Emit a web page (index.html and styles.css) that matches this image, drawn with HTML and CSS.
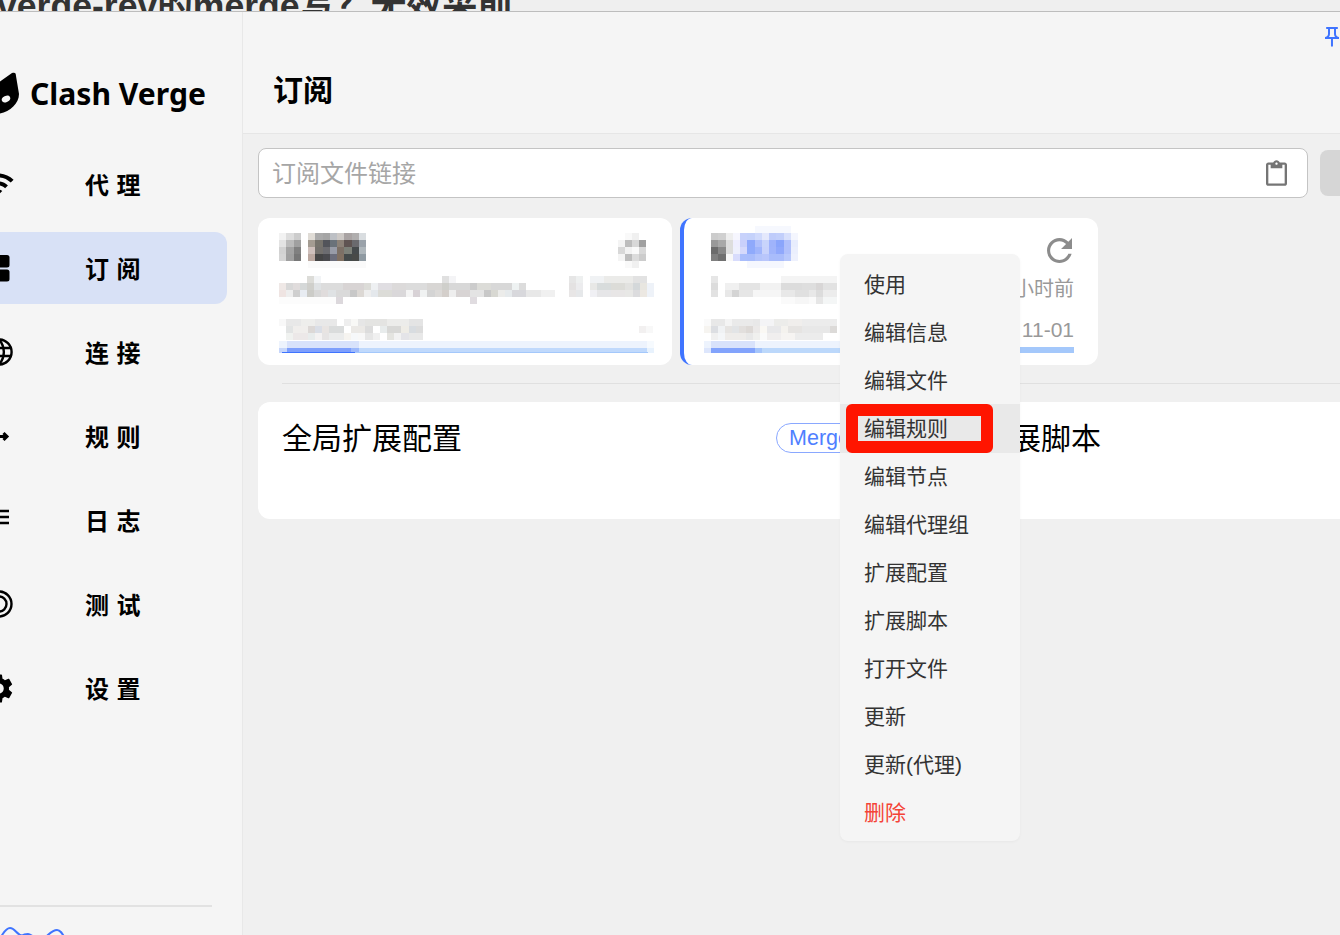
FILE: index.html
```html
<!DOCTYPE html>
<html lang="zh-CN">
<head>
<meta charset="utf-8">
<title>Clash Verge</title>
<link rel="stylesheet" href="styles.css">
</head>
<body>
<div class="strip"><div class="strip-text">verge-rev的merge写？无效采前</div></div>
<div class="app">
  <aside class="sidebar">
    <div class="logo">
      <svg class="cat" viewBox="0 0 48 42"><path d="M0 10 C8 6 18 8 27 11 L41 1 C44 0 45 1 45 4 L48 22 C48 33 36 42 24 42 C10 42 0 34 0 24Z" fill="#000"/><ellipse cx="35" cy="27" rx="4.5" ry="3" transform="rotate(-28 35 27)" fill="#f5f5f5"/></svg>
      <span class="logo-text">Clash Verge</span>
    </div>
    <nav class="nav">
      <a class="nav-item"><svg class="nav-icon wifi" viewBox="0 0 24 24"><path d="M1 9l2 2c4.97-4.97 13.03-4.97 18 0l2-2C16.93 2.93 7.08 2.93 1 9zm8 8l3 3 3-3c-1.65-1.66-4.34-1.66-6 0zm-4-4l2 2c2.76-2.76 7.24-2.76 10 0l2-2C15.14 9.14 8.87 9.14 5 13z"/></svg><span>代 理</span></a>
      <a class="nav-item active"><svg class="nav-icon" viewBox="0 0 28 28"><rect x="0" y="1" width="24.5" height="12.5" rx="2.5"/><rect x="0" y="15.5" width="24.5" height="12" rx="2.5"/></svg><span>订 阅</span></a>
      <a class="nav-item"><svg class="nav-icon line" viewBox="0 0 28 28"><circle cx="14" cy="14" r="12.6"/><path d="M1.600 10h24.800M1.600 18h24.800M14 1.600c-6.500 7-6.500 17.800 0 24.800M14 1.600c6.500 7 6.500 17.800 0 24.800"/></svg><span>连 接</span></a>
      <a class="nav-item"><svg class="nav-icon line heavy" viewBox="0 0 28 28"><path d="M4 14.500h18M18.500 11l3.500 3.500-3.500 3.500"/></svg><span>规 则</span></a>
      <a class="nav-item"><svg class="nav-icon line" viewBox="0 0 28 28"><path d="M2 5h22M2 11h22M2 17h22"/></svg><span>日 志</span></a>
      <a class="nav-item"><svg class="nav-icon line" viewBox="0 0 28 28"><path d="M14 1.500a12.500 12.500 0 0 1 0 25M14 6.500a7.500 7.500 0 0 1 0 15M14 1.500a12.500 12.500 0 0 0 0 25M14 6.500a7.500 7.500 0 0 0 0 15"/></svg><span>测 试</span></a>
      <a class="nav-item"><svg class="nav-icon gear" viewBox="0 0 24 24"><path d="M19.140 12.940c.04-.3.060-.61.060-.94 0-.32-.02-.64-.07-.94l2.030-1.580c.18-.14.23-.41.120-.61l-1.920-3.320c-.12-.22-.37-.29-.59-.22l-2.390.96c-.5-.38-1.030-.7-1.620-.94l-.36-2.540c-.04-.24-.24-.41-.48-.41h-3.840c-.24 0-.43.17-.47.41l-.36 2.540c-.59.24-1.130.57-1.620.94l-2.390-.96c-.22-.08-.47 0-.59.22L2.740 8.870c-.12.21-.08.47.12.61l2.030 1.580c-.05.3-.09.63-.09.94s.02.64.07.94l-2.030 1.580c-.18.14-.23.41-.12.61l1.920 3.320c.12.22.37.29.59.22l2.390-.96c.5.38 1.030.7 1.620.94l.36 2.540c.05.24.24.41.48.41h3.840c.24 0 .44-.17.47-.41l.36-2.540c.59-.24 1.130-.56 1.620-.94l2.390.96c.22.08.47 0 .59-.22l1.920-3.320c.12-.22.07-.47-.12-.61l-2.010-1.580zM12 15.600c-1.980 0-3.600-1.620-3.600-3.600s1.620-3.600 3.600-3.600 3.600 1.620 3.600 3.600-1.620 3.600-3.600 3.600z"/></svg><span>设 置</span></a>
    </nav>
    <div class="traffic">
      <svg class="traffic-graph" viewBox="0 0 212 29"><path d="M-1 32C3 28 5 21 10 21C15 21 17 28 22 28.500C24 27 26 27 28 27C31 27 33 31 40 32C46 33 50 23 57 23C61 23 63 28 66 33M182 32C185 28 191 28 194 32"/></svg>
    </div>
  </aside>
  <main class="content">
    <header class="header">
      <div class="header-actions">
        <svg class="pin" viewBox="0 0 24 24"><path d="M14 4v5c0 1.120.37 2.160 1 3H9c.65-.86 1-1.900 1-3V4h4m3-2H7c-.55 0-1 .45-1 1s.45 1 1 1h1v5c0 1.660-1.340 3-3 3v2h5.970v7l1 1 1-1v-7H19v-2c-1.660 0-3-1.340-3-3V4h1c.55 0 1-.45 1-1s-.45-1-1-1z"/></svg>
      </div>
      <h1 class="title">订阅</h1>
    </header>
    <div class="body">
      <div class="input-row">
        <div class="input"><span class="placeholder">订阅文件链接</span>
          <svg class="clip" viewBox="3 0 18 22"><path d="M19 2h-4.180C14.400.84 13.300 0 12 0c-1.300 0-2.400.84-2.820 2H5c-1.100 0-2 .9-2 2v16c0 1.100.9 2 2 2h14c1.100 0 2-.9 2-2V4c0-1.100-.9-2-2-2zm-7 0c.55 0 1 .45 1 1s-.45 1-1 1-1-.45-1-1 .45-1 1-1zm7 18H5V4h2v3h10V4h2v16z"/></svg>
        </div>
        <div class="import-btn"></div>
      </div>
      <div class="cards">
        <section class="card card-one">
          <svg class="mosaic" width="375" height="127" viewBox="0 0 375 127" shape-rendering="crispEdges">
            <g transform="translate(0 7) scale(7.25 7)">
              <rect x="0" y="0" width="1" fill="#f2f2f2"/><rect x="1" y="0" width="1" fill="#dddddd"/><rect x="2" y="0" width="1" fill="#cccccc"/><rect x="4" y="0" width="1" fill="#e0dcd6"/><rect x="5" y="0" width="1" fill="#aaaaaa"/><rect x="6" y="0" width="1" fill="#a5a5a5"/><rect x="7" y="0" width="1" fill="#bdc0c5"/><rect x="8" y="0" width="1" fill="#cdc9c6"/><rect x="9" y="0" width="1" fill="#a9a3a3"/><rect x="10" y="0" width="1" fill="#b0aeae"/><rect x="11" y="0" width="1" fill="#d9dde0"/>
              <rect x="0" y="1" width="1" fill="#e3e3e3"/><rect x="1" y="1" width="1" fill="#bbbbbb"/><rect x="2" y="1" width="1" fill="#a0a0a0"/><rect x="4" y="1" width="1" fill="#a49c92"/><rect x="5" y="1" width="1" fill="#76736c"/><rect x="6" y="1" width="1" fill="#52545a"/><rect x="7" y="1" width="1" fill="#6a727a"/><rect x="8" y="1" width="1" fill="#8c8278"/><rect x="9" y="1" width="1" fill="#5f5452"/><rect x="10" y="1" width="1" fill="#6a6a6e"/><rect x="11" y="1" width="1" fill="#9aa2aa"/>
              <rect x="0" y="2" width="1" fill="#d2d2d2"/><rect x="1" y="2" width="1" fill="#a3a3a3"/><rect x="2" y="2" width="1" fill="#808080"/><rect x="4" y="2" width="1" fill="#cfc0bc"/><rect x="5" y="2" width="1" fill="#73706c"/><rect x="6" y="2" width="1" fill="#6c6c70"/><rect x="7" y="2" width="1" fill="#989ca8"/><rect x="8" y="2" width="1" fill="#7c7066"/><rect x="9" y="2" width="1" fill="#7c8078"/><rect x="10" y="2" width="1" fill="#454a4c"/><rect x="11" y="2" width="1" fill="#aeb6bb"/>
              <rect x="0" y="3" width="1" fill="#d5d5d5"/><rect x="1" y="3" width="1" fill="#a0a0a0"/><rect x="2" y="3" width="1" fill="#777777"/><rect x="4" y="3" width="1" fill="#bba8a0"/><rect x="5" y="3" width="1" fill="#454545"/><rect x="6" y="3" width="1" fill="#4a4a4e"/><rect x="7" y="3" width="1" fill="#6c6e7c"/><rect x="8" y="3" width="1" fill="#807062"/><rect x="9" y="3" width="1" fill="#444a4a"/><rect x="10" y="3" width="1" fill="#484a48"/><rect x="11" y="3" width="1" fill="#8f9aa2"/>
              <rect x="4" y="4" width="8" fill="#fafafa"/>
            </g>
            <g transform="translate(339 7) scale(7)">
              <rect x="1" y="0" width="1" fill="#f9f9f9"/><rect x="2" y="0" width="1" fill="#f0f0f0"/>
              <rect x="0" y="1" width="1" fill="#f4f4f4"/><rect x="1" y="1" width="1" fill="#bdbdbd"/><rect x="2" y="1" width="1" fill="#d8d8d8"/><rect x="3" y="1" width="1" fill="#a0a0a0"/>
              <rect x="0" y="2" width="1" fill="#d8d8d8"/><rect x="1" y="2" width="1" fill="#f2f2f2"/><rect x="2" y="2" width="1" fill="#fafafa"/><rect x="3" y="2" width="1" fill="#d8d8d8"/>
              <rect x="0" y="3" width="1" fill="#f4f4f4"/><rect x="1" y="3" width="1" fill="#bdbdbd"/><rect x="2" y="3" width="1" fill="#dcdcdc"/><rect x="3" y="3" width="1" fill="#cccccc"/>
              <rect x="1" y="4" width="1" fill="#f9f9f9"/><rect x="2" y="4" width="1" fill="#f0f0f0"/>
            </g>
            <g transform="translate(0 50) scale(7.07 7)">
              <rect x="4" y="0" width="1" fill="#dcdcd8"/><rect x="5" y="0" width="1" fill="#f2f4f6"/><rect x="23" y="0" width="1" fill="#e0e0e0"/><rect x="24" y="0" width="1" fill="#f4f4f6"/><rect x="41" y="0" width="1" fill="#e6e6e6"/><rect x="42" y="0" width="1" fill="#eef0f0"/><rect x="44" y="0" width="2" fill="#f0f2f4"/><rect x="46" y="0" width="4" fill="#ebebe9"/><rect x="50" y="0" width="2" fill="#e2e2e2"/>
              <rect x="0" y="1" width="1" fill="#efe8e6"/><rect x="1" y="1" width="1" fill="#d8d8d8"/><rect x="2" y="1" width="1" fill="#e0dcdc"/><rect x="3" y="1" width="1" fill="#d5d8d8"/><rect x="4" y="1" width="1" fill="#cfcfcb"/><rect x="5" y="1" width="1" fill="#dfe2e4"/><rect x="6" y="1" width="3" fill="#dcdcdc"/><rect x="9" y="1" width="3" fill="#d8d4d4"/><rect x="12" y="1" width="1" fill="#dcdcd8"/><rect x="13" y="1" width="1" fill="#eef0f2"/><rect x="14" y="1" width="2" fill="#e0dee2"/><rect x="16" y="1" width="2" fill="#dcdada"/><rect x="18" y="1" width="3" fill="#dcdcdc"/><rect x="21" y="1" width="2" fill="#d8d6d4"/><rect x="23" y="1" width="1" fill="#cfcfcb"/><rect x="24" y="1" width="3" fill="#d8d8d8"/><rect x="27" y="1" width="1" fill="#cccccc"/><rect x="28" y="1" width="2" fill="#dcdcd8"/><rect x="30" y="1" width="3" fill="#d8d8d8"/><rect x="33" y="1" width="1" fill="#eef2f2"/><rect x="34" y="1" width="1" fill="#dcdcdc"/>
              <rect x="41" y="1" width="1" fill="#e4e2e2"/><rect x="42" y="1" width="1" fill="#ececee"/><rect x="44" y="1" width="1" fill="#e8e8e6"/><rect x="45" y="1" width="2" fill="#d8dcdc"/><rect x="47" y="1" width="2" fill="#dcdcd8"/><rect x="49" y="1" width="1" fill="#e2e2e0"/><rect x="50" y="1" width="1" fill="#d4d8da"/><rect x="51" y="1" width="1" fill="#e8e6e0"/><rect x="52" y="1" width="1" fill="#eef2f8"/>
              <rect x="0" y="2" width="1" fill="#efe4e2"/><rect x="1" y="2" width="1" fill="#eeeeee"/><rect x="2" y="2" width="1" fill="#cfcfcf"/><rect x="3" y="2" width="1" fill="#e8ecf2"/><rect x="4" y="2" width="1" fill="#ccccc8"/><rect x="5" y="2" width="1" fill="#d8d8d8"/><rect x="6" y="2" width="1" fill="#e0dcdc"/><rect x="7" y="2" width="1" fill="#dfe2e4"/><rect x="8" y="2" width="2" fill="#dadada"/><rect x="10" y="2" width="1" fill="#c8c8c8"/><rect x="11" y="2" width="1" fill="#dcd8d4"/><rect x="12" y="2" width="1" fill="#eeeeee"/><rect x="13" y="2" width="1" fill="#e4e8ec"/><rect x="14" y="2" width="2" fill="#dcdcd8"/><rect x="16" y="2" width="2" fill="#dad8da"/><rect x="18" y="2" width="1" fill="#f4f4f4"/><rect x="19" y="2" width="1" fill="#d8d2d6"/><rect x="20" y="2" width="1" fill="#f0f2f2"/><rect x="21" y="2" width="1" fill="#d4d4d4"/><rect x="22" y="2" width="1" fill="#dcdad8"/><rect x="23" y="2" width="1" fill="#d4cfcb"/><rect x="24" y="2" width="1" fill="#eeeeee"/><rect x="25" y="2" width="2" fill="#d8d4d4"/><rect x="27" y="2" width="2" fill="#e4e4e4"/><rect x="29" y="2" width="1" fill="#c8c8c8"/><rect x="30" y="2" width="1" fill="#d8d8d2"/><rect x="31" y="2" width="1" fill="#ececea"/><rect x="32" y="2" width="1" fill="#e6eaec"/><rect x="33" y="2" width="2" fill="#d8d8dc"/><rect x="35" y="2" width="2" fill="#e8e8e8"/><rect x="37" y="2" width="2" fill="#f0f0f0"/>
              <rect x="41" y="2" width="1" fill="#e8e6e6"/><rect x="42" y="2" width="1" fill="#e6e8ea"/><rect x="44" y="2" width="1" fill="#f0f0f4"/><rect x="45" y="2" width="2" fill="#e6e6e8"/><rect x="47" y="2" width="2" fill="#e8e6e6"/><rect x="49" y="2" width="1" fill="#e8e8e6"/><rect x="50" y="2" width="1" fill="#dcdcde"/><rect x="51" y="2" width="1" fill="#ece8e2"/><rect x="52" y="2" width="1" fill="#eef2f8"/>
              <rect x="0" y="3" width="8" fill="#fcfcfc"/><rect x="8" y="3" width="1" fill="#dcd8dc"/><rect x="27" y="3" width="1" fill="#e0dce0"/>
            </g>
            <g transform="translate(0 93) scale(7.2 7)">
              <rect x="0" y="0" width="1" fill="#f8f8f8"/><rect x="1" y="0" width="2" fill="#e8e8e8"/><rect x="3" y="0" width="2" fill="#eeeeec"/><rect x="5" y="0" width="3" fill="#e8e8e8"/><rect x="9" y="0" width="1" fill="#eeeeee"/><rect x="10" y="0" width="1" fill="#f8f8f6"/><rect x="11" y="0" width="1" fill="#e6e6e6"/><rect x="12" y="0" width="3" fill="#e4e4e2"/><rect x="15" y="0" width="3" fill="#ececea"/><rect x="18" y="0" width="2" fill="#e4e4e4"/>
              <rect x="1" y="1" width="1" fill="#e2e4e4"/><rect x="2" y="1" width="2" fill="#f0eeec"/><rect x="4" y="1" width="1" fill="#dcd8d6"/><rect x="5" y="1" width="1" fill="#dadee6"/><rect x="6" y="1" width="1" fill="#e8e4e2"/><rect x="7" y="1" width="2" fill="#dadcdc"/><rect x="10" y="1" width="2" fill="#ebe9e6"/><rect x="12" y="1" width="1" fill="#dcdcdc"/><rect x="14" y="1" width="1" fill="#e8ecec"/><rect x="15" y="1" width="2" fill="#d8d8d6"/><rect x="17" y="1" width="1" fill="#eeece6"/><rect x="18" y="1" width="1" fill="#d8dce0"/><rect x="19" y="1" width="1" fill="#dcdcdc"/><rect x="50" y="1" width="1" fill="#f2f0f0"/><rect x="51" y="1" width="1" fill="#f8f8f8"/>
              <rect x="1" y="2" width="1" fill="#f0f2f0"/><rect x="2" y="2" width="2" fill="#ece8e8"/><rect x="4" y="2" width="1" fill="#e8ecec"/><rect x="5" y="2" width="1" fill="#f4f2f2"/><rect x="6" y="2" width="1" fill="#e6e4e4"/><rect x="7" y="2" width="2" fill="#ebecec"/><rect x="9" y="2" width="1" fill="#f6f4f0"/><rect x="10" y="2" width="1" fill="#f6f8fa"/><rect x="11" y="2" width="1" fill="#f8f8f8"/><rect x="12" y="2" width="1" fill="#e6e6e6"/><rect x="13" y="2" width="1" fill="#f0f0f0"/><rect x="15" y="2" width="1" fill="#e4e4e0"/><rect x="16" y="2" width="1" fill="#f2f2f2"/><rect x="17" y="2" width="1" fill="#e4e4e8"/><rect x="18" y="2" width="2" fill="#e8e8e8"/>
            </g>
            <g transform="translate(0 115) scale(1 7)">
              <rect x="0" y="0" width="375" fill="#edf3fd"/><rect x="8" y="0" width="72" fill="#d8e2fb"/><rect x="368" y="0" width="7" fill="#f6fafe"/>
              <rect x="0" y="1" width="8" fill="#c6d6fb"/><rect x="8" y="1" width="64" fill="#7e9ffc"/><rect x="72" y="1" width="8" fill="#9db9fb"/><rect x="80" y="1" width="288" fill="#c0d9fc"/><rect x="368" y="1" width="7" fill="#e8f2fd"/>
            </g>
            <rect class="solid" x="3" y="126" width="73" height="1" fill="#3f74ff"/><rect class="solid" x="76" y="126" width="293" height="1" fill="#a4c8fb"/>
          </svg>
        </section>
        <section class="card card-two">
          <div class="c-row c-title">
            <svg class="mosaic" width="94" height="42" viewBox="0 0 94 42" shape-rendering="crispEdges">
              <g transform="translate(7 0) scale(7.25 7)">
                <rect x="6" y="0" width="5" fill="#f6f8fe"/>
                <rect x="0" y="1" width="1" fill="#cccccc"/><rect x="1" y="1" width="1" fill="#d0d0d0"/><rect x="2" y="1" width="1" fill="#eeeeee"/><rect x="3" y="1" width="1" fill="#f6f6fe"/><rect x="4" y="1" width="1" fill="#c8d2fb"/><rect x="5" y="1" width="1" fill="#c5d2fb"/><rect x="6" y="1" width="1" fill="#d0dafc"/><rect x="7" y="1" width="1" fill="#e4e8fc"/><rect x="8" y="1" width="1" fill="#bfccfb"/><rect x="9" y="1" width="1" fill="#c2cffb"/><rect x="10" y="1" width="1" fill="#d8e0fc"/><rect x="11" y="1" width="1" fill="#f4f6fe"/>
                <rect x="0" y="2" width="1" fill="#999999"/><rect x="1" y="2" width="1" fill="#a8a8a8"/><rect x="2" y="2" width="1" fill="#dddddd"/><rect x="3" y="2" width="1" fill="#eeeeff"/><rect x="4" y="2" width="1" fill="#c9d0fb"/><rect x="5" y="2" width="1" fill="#8fa9fb"/><rect x="6" y="2" width="1" fill="#b0c0fb"/><rect x="7" y="2" width="1" fill="#c8d4fb"/><rect x="8" y="2" width="1" fill="#9fb3fb"/><rect x="9" y="2" width="1" fill="#8aa5fb"/><rect x="10" y="2" width="1" fill="#b0c0fb"/><rect x="11" y="2" width="1" fill="#e8edfd"/>
                <rect x="0" y="3" width="1" fill="#6c6c6c"/><rect x="1" y="3" width="1" fill="#888888"/><rect x="2" y="3" width="1" fill="#dddddd"/><rect x="3" y="3" width="1" fill="#eef0fd"/><rect x="4" y="3" width="1" fill="#d5d9fb"/><rect x="5" y="3" width="1" fill="#8faafb"/><rect x="6" y="3" width="1" fill="#a0b5fb"/><rect x="7" y="3" width="1" fill="#c8d2fb"/><rect x="8" y="3" width="1" fill="#a0b4fb"/><rect x="9" y="3" width="1" fill="#90a8fb"/><rect x="10" y="3" width="1" fill="#b0c0fb"/><rect x="11" y="3" width="1" fill="#ebeffd"/>
                <rect x="0" y="4" width="1" fill="#808080"/><rect x="1" y="4" width="1" fill="#707070"/><rect x="2" y="4" width="1" fill="#f8f8f8"/><rect x="3" y="4" width="1" fill="#d8dcfc"/><rect x="4" y="4" width="1" fill="#a9bdfb"/><rect x="5" y="4" width="1" fill="#a8bcfb"/><rect x="6" y="4" width="1" fill="#b4c4fb"/><rect x="7" y="4" width="1" fill="#b9c6fb"/><rect x="8" y="4" width="2" fill="#a9bcfb"/><rect x="10" y="4" width="1" fill="#b8c8fb"/><rect x="11" y="4" width="1" fill="#eef1fd"/>
                <rect x="5" y="5" width="5" fill="#f5f7fe"/>
              </g>
            </svg>
            <svg class="refresh" viewBox="4 4 16 16"><path d="M17.650 6.350C16.200 4.900 14.210 4 12 4c-4.420 0-7.990 3.580-7.990 8s3.570 8 7.990 8c3.730 0 6.840-2.550 7.730-6h-2.080c-.82 2.330-3.040 4-5.650 4-3.310 0-6-2.690-6-6s2.690-6 6-6c1.660 0 3.140.69 4.220 1.780L13 11h7V4l-2.350 2.350z"/></svg>
          </div>
          <div class="c-row c-info">
            <svg class="mosaic" width="140" height="28" viewBox="0 0 140 28" shape-rendering="crispEdges">
              <g transform="scale(7)">
                <rect x="1" y="0" width="1" fill="#e6e6e6"/><rect x="11" y="0" width="8" fill="#f4f4f4"/>
                <rect x="1" y="1" width="1" fill="#dcdcdc"/><rect x="3" y="1" width="2" fill="#f0f0f0"/><rect x="5" y="1" width="3" fill="#e4e4e4"/><rect x="8" y="1" width="3" fill="#f2f2f2"/><rect x="11" y="1" width="3" fill="#dcdcdc"/><rect x="14" y="1" width="2" fill="#dedede"/><rect x="16" y="1" width="1" fill="#d8d6d6"/><rect x="17" y="1" width="2" fill="#e2e2e2"/>
                <rect x="1" y="2" width="1" fill="#e2e2e2"/><rect x="3" y="2" width="1" fill="#e8e8e8"/><rect x="4" y="2" width="1" fill="#d4d4d4"/><rect x="5" y="2" width="2" fill="#e6e6e6"/><rect x="7" y="2" width="4" fill="#f6f6f6"/><rect x="11" y="2" width="2" fill="#e8e8e8"/><rect x="13" y="2" width="2" fill="#e0e0e0"/><rect x="15" y="2" width="1" fill="#e8e8e8"/><rect x="16" y="2" width="1" fill="#dcdcdc"/><rect x="17" y="2" width="2" fill="#ececec"/>
                <rect x="11" y="3" width="2" fill="#fafafa"/><rect x="13" y="3" width="2" fill="#f6f6f6"/><rect x="15" y="3" width="1" fill="#fafafa"/><rect x="16" y="3" width="1" fill="#e6e6e6"/><rect x="17" y="3" width="2" fill="#f4f6f6"/>
              </g>
            </svg>
            <span class="meta">小时前</span>
          </div>
          <div class="c-row c-foot">
            <svg class="mosaic" width="140" height="21" viewBox="0 0 140 21" shape-rendering="crispEdges">
              <g transform="scale(7)">
                <rect x="0" y="0" width="1" fill="#fafafa"/><rect x="1" y="0" width="2" fill="#e8e8e8"/><rect x="3" y="0" width="1" fill="#f4f4f4"/><rect x="4" y="0" width="3" fill="#eaeaea"/><rect x="7" y="0" width="1" fill="#e8e8e8"/><rect x="8" y="0" width="2" fill="#f4f4f6"/><rect x="10" y="0" width="2" fill="#ececea"/><rect x="12" y="0" width="2" fill="#f0eeec"/><rect x="14" y="0" width="5" fill="#ececec"/>
                <rect x="0" y="1" width="1" fill="#f6f4f0"/><rect x="1" y="1" width="1" fill="#dcdee2"/><rect x="2" y="1" width="1" fill="#f0f2f4"/><rect x="3" y="1" width="1" fill="#e6e4e2"/><rect x="4" y="1" width="1" fill="#e2e4e6"/><rect x="5" y="1" width="1" fill="#e2dfdd"/><rect x="6" y="1" width="1" fill="#ddd9d6"/><rect x="7" y="1" width="1" fill="#ebe9e8"/><rect x="8" y="1" width="1" fill="#faf8f4"/><rect x="9" y="1" width="2" fill="#e8e8ea"/><rect x="11" y="1" width="1" fill="#f4f2ee"/><rect x="12" y="1" width="2" fill="#e6e4e2"/><rect x="14" y="1" width="4" fill="#e8e8e8"/><rect x="18" y="1" width="1" fill="#dcdad8"/>
                <rect x="1" y="2" width="1" fill="#f0f0f0"/><rect x="2" y="2" width="1" fill="#f4f6f8"/><rect x="3" y="2" width="3" fill="#eeecea"/><rect x="6" y="2" width="1" fill="#e8e8e8"/><rect x="7" y="2" width="1" fill="#f0f0ee"/><rect x="8" y="2" width="1" fill="#fafafa"/><rect x="9" y="2" width="2" fill="#f0eeee"/><rect x="11" y="2" width="2" fill="#f6f4f2"/><rect x="13" y="2" width="4" fill="#ececec"/>
              </g>
            </svg>
            <span class="meta">11-01</span>
          </div>
          <svg class="mosaic" width="370" height="12" viewBox="0 0 370 12" shape-rendering="crispEdges">
            <g transform="scale(1 7)">
              <rect x="0" y="0" width="7" fill="#edf3fd"/><rect x="7" y="0" width="44" fill="#d8e2fb"/><rect x="51" y="0" width="96" fill="#edf3fd"/>
              <rect x="0" y="1" width="7" fill="#dde6fc"/><rect x="7" y="1" width="44" fill="#82a3fc"/><rect x="51" y="1" width="7" fill="#a5c5fb"/><rect x="58" y="1" width="89" fill="#bcd8fb"/>
            </g>
            <rect class="solid" x="316" y="6" width="54" height="6" fill="#a4c8fb"/>
          </svg>
        </section>
      </div>
      <div class="divider"></div>
      <div class="extras">
        <section class="extra">
          <h2 class="extra-title">全局扩展配置</h2>
          <span class="badge">Merge</span>
        </section>
        <section class="extra">
          <h2 class="extra-title">全局扩展脚本</h2>
        </section>
      </div>
    </div>
  </main>
</div>
<ul class="menu">
  <li class="menu-item">使用</li>
  <li class="menu-item">编辑信息</li>
  <li class="menu-item">编辑文件</li>
  <li class="menu-item hover">编辑规则<span class="callout"></span></li>
  <li class="menu-item">编辑节点</li>
  <li class="menu-item">编辑代理组</li>
  <li class="menu-item">扩展配置</li>
  <li class="menu-item">扩展脚本</li>
  <li class="menu-item">打开文件</li>
  <li class="menu-item">更新</li>
  <li class="menu-item">更新(代理)</li>
  <li class="menu-item danger">删除</li>
</ul>
</body>
</html>
```
FILE: styles.css
```css
* { box-sizing: border-box; }
html, body { margin: 0; padding: 0; height: 100%; }
body {
  position: relative;
  width: 1340px;
  height: 935px;
  overflow: hidden;
  background: #f0f0f0;
  font-family: "Liberation Sans", "Noto Sans CJK SC", sans-serif;
  color: #000;
}
.strip {
  height: 12px;
  overflow: hidden;
  background: #efefef;
  border-bottom: 1px solid #bdbdbd;
}
.strip-text {
  margin: -12px 0 0 -3px;
  font-size: 35.6px;
  line-height: 36px;
  font-weight: 700;
  color: #333;
  white-space: nowrap;
}
.app { display: flex; height: 923px; }
.sidebar {
  flex: none;
  width: 243px;
  display: flex;
  flex-direction: column;
  background: #f5f5f5;
  border-right: 1px solid #e8e8e8;
}
.logo {
  display: flex;
  align-items: center;
  height: 136px;
  padding-top: 26px;
  margin-left: -29px;
  gap: 12px;
}
.cat { flex: none; width: 48px; height: 42px; }
.logo-text {
  font-family: "Noto Sans", sans-serif;
  font-size: 30.1px;
  font-weight: 700;
  line-height: 1;
  white-space: nowrap;
  margin: 2px 0 0 -1px;
}
.nav { display: flex; flex-direction: column; gap: 12px; margin-left: -40px; width: 267px; }
.nav-item {
  display: flex;
  align-items: center;
  height: 72px;
  padding-left: 25px;
  gap: 72px;
  border-radius: 12px;
  font-family: "Noto Sans CJK SC", sans-serif;
  font-size: 24px;
  font-weight: 700;
  word-spacing: 2px;
}
.nav-item span { margin-bottom: 2px; }
.nav-item.active { background: #d8e1f6; }
.nav-icon { flex: none; width: 28px; height: 28px; fill: #000; }
.nav-icon.line { fill: none; stroke: #000; stroke-width: 2.4; }
.nav-icon.heavy { stroke-width: 3; }
.nav-icon.wifi { width: 34px; height: 34px; margin: 0 -2px 0 -4px; }
.nav-icon.gear { width: 35px; height: 35px; margin: 0 -3px 0 -4px; }
.traffic { margin-top: auto; width: 212px; height: 30px; border-top: 2px solid #e2e2e2; overflow: hidden; }
.traffic-graph { display: block; width: 212px; height: 29px; fill: none; stroke: #3f74ff; stroke-width: 2; }
.content { flex: 1; min-width: 0; }
.header {
  height: 122px;
  background: #f5f5f5;
  border-bottom: 1px solid #e6e6e6;
  padding-left: 30px;
}
.header-actions { display: flex; justify-content: flex-end; padding-top: 13px; margin-right: -4px; }
.pin { display: block; width: 24px; height: 24px; fill: #3f74ff; }
.title { margin: 22px 0 0; font-size: 30px; line-height: 40px; font-weight: 700; }
.body { padding: 14px 0 0 15px; }
.input-row { display: flex; align-items: center; gap: 12px; width: 1200px; }
.input {
  flex: none;
  display: flex;
  align-items: center;
  justify-content: space-between;
  width: 1050px;
  height: 50px;
  padding: 0 20px 0 13px;
  background: #fff;
  border: 1px solid #c4c4c4;
  border-radius: 8px;
}
.placeholder { font-size: 24px; color: #a6a6a6; margin-bottom: 4px; }
.clip { width: 21px; height: 26px; fill: #757575; }
.import-btn { flex: none; width: 100px; height: 46px; border-radius: 8px; background: #d6d6d6; }
.cards { display: flex; gap: 8px; margin-top: 20px; }
.card { flex: none; height: 147px; background: #fff; border-radius: 12px; padding-top: 8px; }
.card-one { width: 414px; padding-left: 21px; }
.card-two { width: 418px; padding-left: 20px; padding-right: 24px; border-left: 4px solid #3f74ff; }
.mosaic { display: block; flex: none; }
.mosaic g rect { height: 1px; }
.c-row { display: flex; justify-content: space-between; }
.c-title { height: 42px; }
.refresh { flex: none; width: 25px; height: 25px; margin: 12px 2px 0 0; fill: #8c8c8c; }
.c-info { height: 43px; padding-top: 8px; align-items: flex-start; }
.c-foot { height: 30px; padding-top: 6px; align-items: flex-start; }
.c-foot .mosaic { margin-top: 2px; }
.meta { font-size: 20px; line-height: 26px; color: #999; white-space: nowrap; }
.c-foot .meta { font-size: 21px; }
.divider { height: 1px; margin: 18px 0 18px 24px; background: #e0e0e0; }
.extras { display: flex; gap: 8px; }
.extra {
  flex: none;
  display: flex;
  justify-content: space-between;
  align-items: flex-start;
  width: 631px;
  height: 117px;
  padding: 14px 24px 0;
  background: #fff;
  border-radius: 12px;
}
.extra-title { margin: 0; font-size: 30px; line-height: 40px; font-weight: 400; font-family: "Noto Sans CJK SC", sans-serif; }
.badge {
  margin-top: 7px;
  height: 30px;
  padding: 0 14px 0 12px;
  border: 1px solid #8aa8ff;
  border-radius: 15px;
  font-size: 21.500px;
  line-height: 28px;
  color: #4f7fff;
}
.menu {
  position: absolute;
  left: 840px;
  top: 254px;
  width: 180px;
  margin: 0;
  padding: 7px 0 4px;
  list-style: none;
  background: #f5f5f5;
  border-radius: 8px;
  box-shadow: 0 1px 3px rgba(0,0,0,.04);
}
.menu-item {
  position: relative;
  height: 48px;
  padding-left: 24px;
  font-size: 21px;
  line-height: 48px;
  color: #333;
  white-space: nowrap;
}
.menu-item.hover { height: 49px; margin-top: -1px; padding-top: 1px; background: #e9e9e9; }
.menu-item.danger { color: #f44336; }
.callout {
  position: absolute;
  left: 6px;
  top: 0;
  width: 147px;
  height: 49px;
  border: 12px solid #ff1500;
  border-radius: 6px;
}
```
